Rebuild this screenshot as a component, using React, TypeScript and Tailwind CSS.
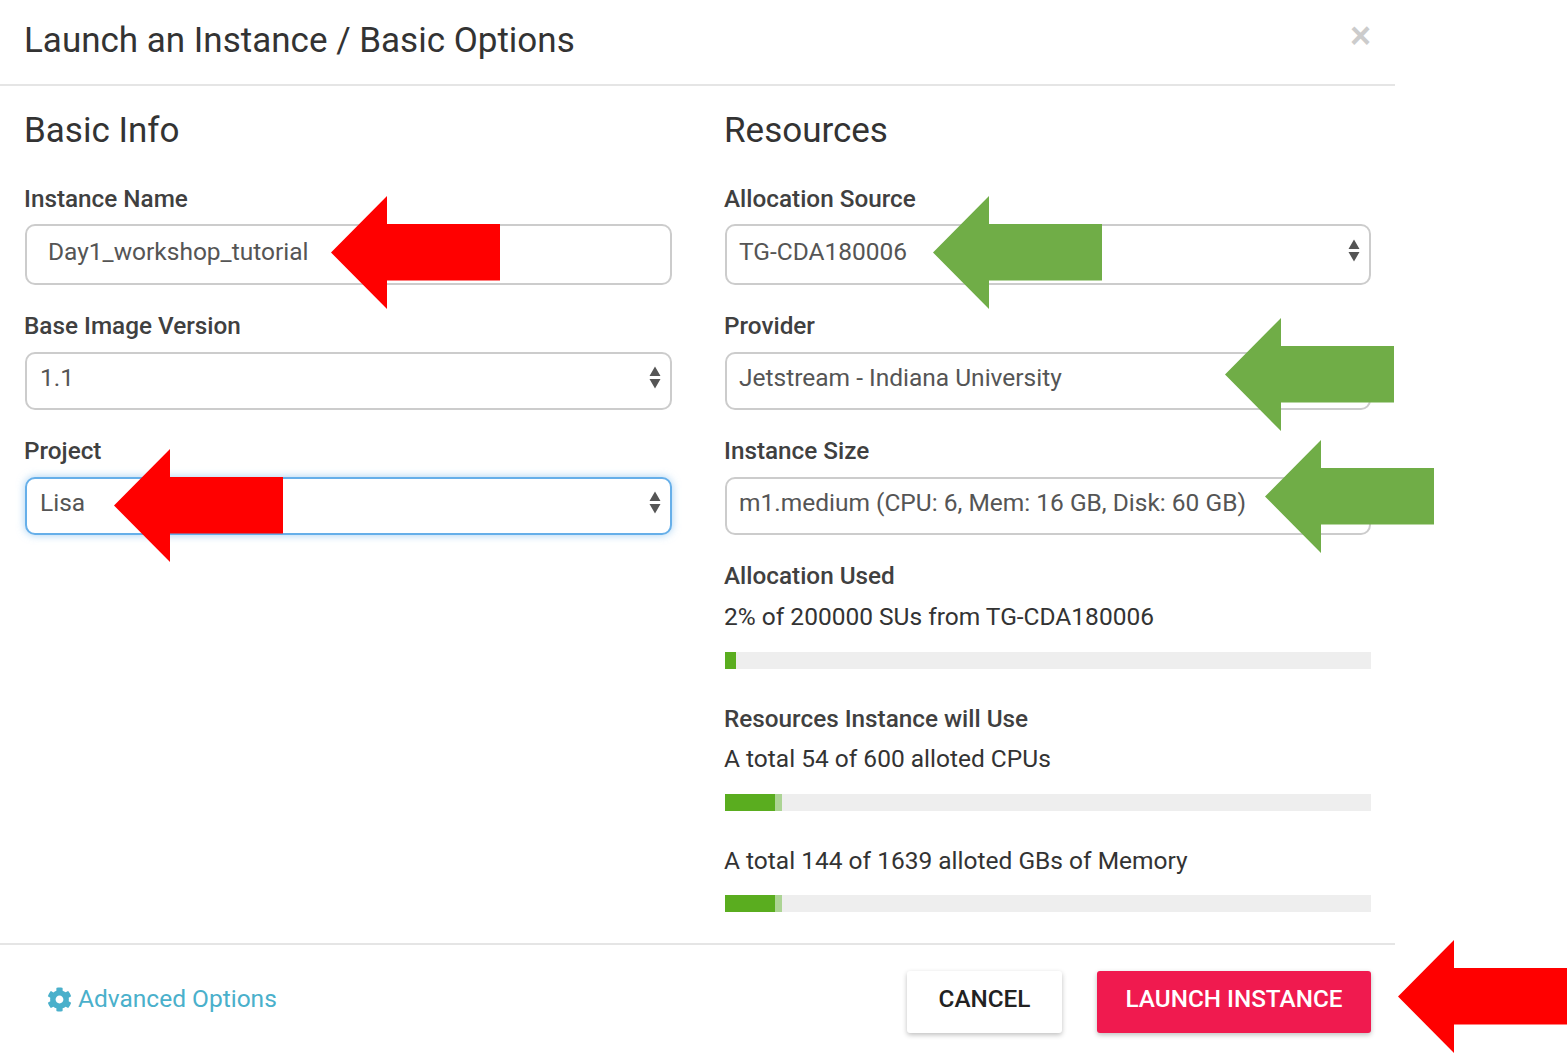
import { ReactNode } from "react"
import { FaCog } from "react-icons/fa"

function SelectArrows() {
  return (
    <svg width="12" height="23" viewBox="0 0 12 23" className="mb-[3px] text-[#555]" aria-hidden="true">
      <path d="M6 0.5 L11.5 10 H0.5 Z M0.5 13 H11.5 L6 22.5 Z" fill="currentColor" />
    </svg>
  )
}

function Field({
  label,
  value,
  className,
  boxClass,
  arrows,
}: {
  label: string
  value: string
  className: string
  boxClass?: string
  arrows?: boolean
}) {
  return (
    <div className={className}>
      <label className="-ml-[1px] block h-[28px] text-[24.3px] leading-[28px] font-medium text-[#404040]">{label}</label>
      <div
        className={`flex items-center justify-between rounded-[10px] border-2 bg-white pr-[9px] pb-[5px] text-[24.5px] text-[#555] ${
          boxClass ?? "mt-[12px] h-[58px] border-[#ccc] pl-[13px]"
        }`}
      >
        <span>{value}</span>
        {arrows && <SelectArrows />}
      </div>
    </div>
  )
}

function Progress({ className, used, planned }: { className: string; used: string; planned?: string }) {
  return (
    <div className={`flex h-[17px] bg-[#eeeeee] ${className}`}>
      <div className={`h-full bg-[#5aad1f] ${used}`} />
      {planned && <div className={`h-full bg-[#acd494] ${planned}`} />}
    </div>
  )
}

function Arrow({ className, color }: { className: string; color: string }) {
  return (
    <svg
      width="169"
      height="113"
      viewBox="0 0 169 113"
      className={`absolute ${className}`}
      aria-hidden="true"
    >
      <polygon points="0,56.5 56,0 56,28 169,28 169,84.5 56,84.5 56,113" fill={color} />
    </svg>
  )
}

function Line({ children, className }: { children: ReactNode; className: string }) {
  return <div className={`-ml-[1px] h-[28px] text-[24.5px] leading-[28px] text-[#333] ${className}`}>{children}</div>
}

export default function App() {
  return (
    <div className="relative h-[1055px] w-[1567px] overflow-hidden bg-white font-['Roboto',sans-serif]">
      <div className="flex h-full w-[1395px] flex-col">
        {/* Header */}
        <div className="flex h-[86px] shrink-0 items-start justify-between border-b-2 border-[#e5e5e5] pl-[24px] pr-[24px]">
          <h1 className="mt-[19px] text-[35px] leading-[44px] text-[#333]">Launch an Instance / Basic Options</h1>
          <span className="mt-[12px] font-['Liberation_Sans',sans-serif] text-[36px] leading-[48px] font-bold text-[#cccccc]">×</span>
        </div>

        {/* Body */}
        <div className="grid h-[857px] shrink-0 grid-cols-[647px_646px] gap-x-[53px] pl-[25px]">
          <div>
            <h2 className="-ml-[1px] mt-[25px] h-[40px] text-[35px] leading-[40px] text-[#333]">Basic Info</h2>
            <Field
              className="mt-[34px]"
              label="Instance Name"
              value="Day1_workshop_tutorial"
              boxClass="mt-[11px] h-[61px] border-[#ccc] pl-[21px]"
            />
            <Field className="mt-[27px]" label="Base Image Version" value="1.1" arrows />
            <Field
              className="mt-[27px]"
              label="Project"
              value="Lisa"
              boxClass="mt-[12px] h-[58px] border-[#66afe9] pl-[13px] shadow-[0_0_8px_rgba(102,175,233,0.6)]"
              arrows
            />
          </div>
          <div>
            <h2 className="-ml-[1px] mt-[25px] h-[40px] text-[35px] leading-[40px] text-[#333]">Resources</h2>
            <Field
              className="mt-[34px]"
              label="Allocation Source"
              value="TG-CDA180006"
              boxClass="mt-[11px] h-[61px] border-[#ccc] pl-[12px]"
              arrows
            />
            <Field
              className="mt-[27px]"
              label="Provider"
              value="Jetstream - Indiana University"
              boxClass="mt-[12px] h-[58px] border-[#ccc] pl-[12px]"
            />
            <Field
              className="mt-[27px]"
              label="Instance Size"
              value="m1.medium (CPU: 6, Mem: 16 GB, Disk: 60 GB)"
              boxClass="mt-[12px] h-[58px] border-[#ccc] pl-[12px]"
            />
            <div className="-ml-[1px] mt-[27px] h-[28px] text-[24.3px] leading-[28px] font-medium text-[#404040]">Allocation Used</div>
            <Line className="mt-[13px]">2% of 200000 SUs from TG-CDA180006</Line>
            <Progress className="mt-[21px]" used="w-[11px]" />
            <div className="-ml-[1px] mt-[36px] h-[28px] text-[24.3px] leading-[28px] font-medium text-[#404040]">Resources Instance will Use</div>
            <Line className="mt-[12px]">A total 54 of 600 alloted CPUs</Line>
            <Progress className="mt-[21px]" used="w-[50px]" planned="w-[7px]" />
            <Line className="mt-[36px]">A total 144 of 1639 alloted GBs of Memory</Line>
            <Progress className="mt-[20px]" used="w-[50px]" planned="w-[7px]" />
          </div>
        </div>

        {/* Footer */}
        <div className="flex flex-1 items-start justify-between border-t-2 border-[#e5e5e5] pl-[47px] pr-[24px]">
          <a className="mt-[40px] flex items-center gap-[6px] text-[24.5px] leading-[28px] text-[#4ab0cb]">
            <FaCog className="size-[25px]" aria-hidden="true" />
            Advanced Options
          </a>
          <div className="mt-[26px] flex gap-[35px]">
            <button className="h-[62px] w-[155px] rounded-[3px] bg-white pb-[5px] text-[24.3px] font-medium text-[#222] shadow-[0_2px_5px_rgba(0,0,0,0.25)]">
              CANCEL
            </button>
            <button className="h-[62px] w-[274px] rounded-[3px] bg-[#f01a4f] pb-[5px] text-[24.3px] font-medium text-white shadow-[0_2px_5px_rgba(0,0,0,0.25)]">
              LAUNCH INSTANCE
            </button>
          </div>
        </div>
      </div>

      {/* Annotation arrows */}
      <Arrow className="left-[331px] top-[196px]" color="#ff0000" />
      <Arrow className="left-[114px] top-[449px]" color="#ff0000" />
      <Arrow className="left-[933px] top-[196px]" color="#70ad47" />
      <Arrow className="left-[1225px] top-[318px]" color="#70ad47" />
      <Arrow className="left-[1265px] top-[440px]" color="#70ad47" />
      <Arrow className="left-[1398px] top-[940px]" color="#ff0000" />
    </div>
  )
}
